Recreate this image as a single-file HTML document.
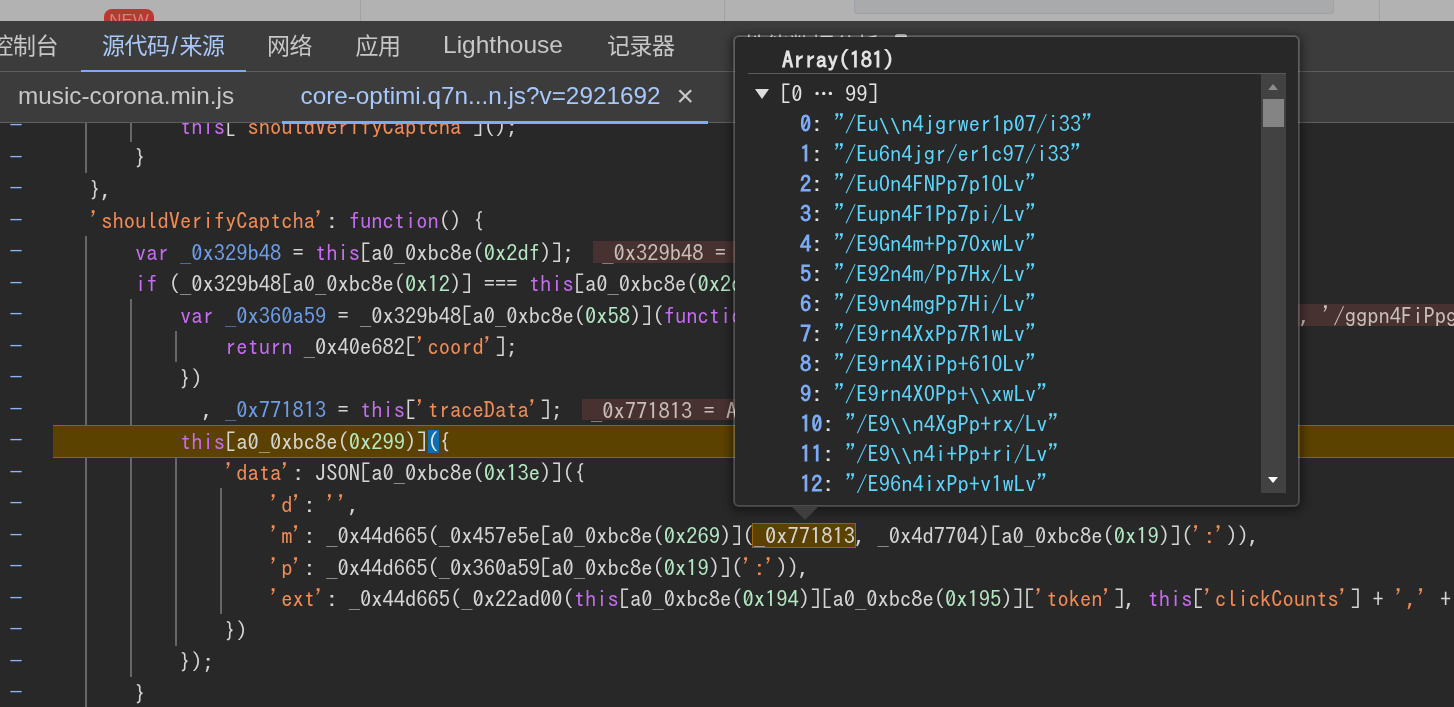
<!DOCTYPE html>
<html lang="zh-CN"><head><meta charset="utf-8"><title>DevTools</title>
<style>
*{box-sizing:border-box;margin:0;padding:0}
html,body{width:1454px;height:707px;overflow:hidden;background:#282828}
body{position:relative;font-family:"Liberation Sans","Noto Sans CJK SC",sans-serif;color:#e3e3e3}
.mono,.ln,.gm,.pop{font-family:"IPAGothic","DejaVu Sans Mono","Liberation Mono",monospace;font-size:22.5px;font-size-adjust:ch-width 0.5;}
/* page strip behind devtools */
#strip{will-change:transform;position:absolute;left:0;top:0;width:1454px;height:21px;background:#b2b2b2;overflow:hidden}
#strip .vl{position:absolute;top:0;width:1px;height:21px;background:#a1a1a4}
#strip .inp{position:absolute;left:854px;top:-10px;width:480px;height:23.5px;background:#a9aaac;border:1px solid #a0a1aa;border-radius:3px}
#strip .new{position:absolute;left:104px;top:9px;width:50px;height:24px;border-radius:8px;background:#b63a30;color:#c98880;font:normal 17px/16px "Liberation Sans",sans-serif;text-align:center;padding-top:3.6px;letter-spacing:0}
/* main tabs */
#tabs{will-change:transform;position:absolute;left:0;top:21px;width:1454px;height:51px;background:#3c3c3c;white-space:nowrap}
.hl{position:absolute;left:0;top:50px;width:1454px;height:1px;background:#5e5e5e}
#tabs span{position:absolute;top:0.5px;line-height:48px;font-size:23px;letter-spacing:-.5px;color:#c7c7c7}
#tabs span.on{color:#a8c7fa}
#tabs em{font-style:normal;margin:0 2px}
#tabs .ul{position:absolute;left:80.5px;top:48.7px;width:165.5px;height:2.5px;background:#7cacf8}
/* file tabs */
#files{will-change:transform;position:absolute;left:0;top:72px;width:1454px;height:51px;background:#3c3c3c;white-space:nowrap}
#files span{position:absolute;top:0;line-height:47px;font-size:24.3px;color:#c7c7c7}
#files span.on{color:#a8c7fa}
.ul2{position:absolute;left:282px;top:121px;width:426px;height:3px;background:#7cacf8}
/* code */
#code{position:absolute;left:0;top:123px;width:1454px;height:584px;overflow:hidden;background:#282828}
#code .inner{will-change:transform;position:absolute;left:0;top:-123px;width:1454px;height:707px}
.ln{position:absolute;left:0;width:1454px;height:31.5px;line-height:31.5px;white-space:pre;color:#d5d5d5}
.ln .tx{position:absolute;top:0.75px}
.bs{font-family:"DejaVu Sans Mono","Liberation Mono",monospace}
.ln .g{position:absolute;top:0;width:2px;height:31.5px;background:#676767}
.ln.exec{background:#5c4200;left:53px;width:1401px;border-top:1px solid #996400;border-bottom:1px solid #996400;height:33px;line-height:31.5px}
.ln.exec .tx{margin-left:-53px;top:-0.25px}
.k{color:#c56cf0}.d{color:#6f9ee8}.s{color:#f28b54}.n{color:#b4e8c4}
.chip{display:inline-block;margin-left:19.5px;padding:0 10px 0 9px;height:21.6px;line-height:24px;background:#473231;color:#c9bfba;vertical-align:top;margin-top:4.4px}
.bm{background:#0b6fb5;color:#e8e8e8}
.hv{background:#5c4200;outline:1px solid #996400;outline-offset:0;margin-left:-1px;padding-left:1px}
#gutter{position:absolute;left:0;top:123px;width:53px;height:584px;background:#282828;overflow:hidden}
#gutter .inner{will-change:transform;position:absolute;left:0;top:-123px}
.gm{position:absolute;left:9.5px;width:12px;height:31.5px;line-height:30.8px;color:#8ab4f8;text-align:center;transform:scale(1.25,.8)}
/* popup */
.pop{will-change:transform;position:absolute;left:733px;top:35px;width:567px;height:472px;background:#282828;background-clip:padding-box;border:2px solid rgba(255,255,255,.18);border-radius:6px;box-shadow:0 2px 10px 2px rgba(0,0,0,.45);color:#e3e3e3}
.pop .title{position:absolute;left:47px;top:7.5px;line-height:30px;font-weight:bold}
.pop .sep{position:absolute;left:13px;top:36px;width:538px;height:1px;background:#5a5a5a}
.pop .body{position:absolute;left:13px;top:37px;width:538px;height:419px;overflow:hidden}
.pop .tri{position:absolute;left:7px;top:14.5px;width:0;height:0;border-left:7.5px solid transparent;border-right:7.5px solid transparent;border-top:10.5px solid #dedede}
.pop .rng{position:absolute;left:32px;top:4.5px;line-height:30px;white-space:pre}
.pop .rows{position:absolute;left:52px;top:35px}
.pop .el{font-family:"Noto Sans CJK SC",sans-serif;font-size:20px;font-weight:bold;font-size-adjust:none;letter-spacing:0;position:relative;top:-1px}
.pop .row{height:30px;line-height:30px;white-space:pre}
.pop .row b{color:#7cacf8}
.pop .str{color:#5cd5fb}
.pop .sb{position:absolute;right:0;top:0;width:25px;height:419px;background:#424242}
.pop .sb .th{position:absolute;left:2px;top:24.8px;width:21.2px;height:28.2px;background:#848484}
.pop .sb .up{position:absolute;left:6.7px;top:9.8px;width:0;height:0;border-left:5.8px solid transparent;border-right:5.8px solid transparent;border-bottom:6.5px solid #8c8c8c}
.pop .sb .dn{position:absolute;left:6.7px;top:402.8px;width:0;height:0;border-left:5.8px solid transparent;border-right:5.8px solid transparent;border-top:6.5px solid #fff}
.arrow{position:absolute;left:790.5px;top:506px;width:0;height:0;border-left:14.5px solid transparent;border-right:14.5px solid transparent;border-top:14px solid #3e3e3e}
</style></head><body>
<div id="strip"><div class="new">NEW</div><i class="vl" style="left:360px"></i><i class="vl" style="left:724px"></i><div class="inp"></div><i class="vl" style="left:1379px"></i></div>
<div id="tabs"><div class="hl"></div><span style="left:-9.5px">控制台</span><span class="on" style="left:102px">源代码<em>/</em>来源</span><span style="left:267px">网络</span><span style="left:355.5px">应用</span><span style="left:443px;top:-0.5px;font-size:24.5px;letter-spacing:0">Lighthouse</span><span style="left:607px">记录器</span><span style="left:744px">性能数据分析</span><i style="position:absolute;left:895px;top:12.5px;width:12px;height:5px;border-radius:2.5px;background:#c7c7c7"></i><div class="ul"></div></div>
<div id="files"><div class="hl"></div><span style="left:18px">music-corona.min.js</span><span class="on" style="left:300.5px">core-optimi.q7n...n.js?v=2921692</span><span style="left:676.5px;font-size:30px">×</span></div>
<div id="code"><div class="inner">
<div class="ln" style="top:110.00px"><i class="g" style="left:85.00px"></i><i class="g" style="left:130.00px"></i><span class="tx" style="left:180.00px"><span class="k">this</span>[<span class="s">'shouldVerifyCaptcha'</span>]();</span></div>
<div class="ln" style="top:141.50px"><i class="g" style="left:85.00px"></i><span class="tx" style="left:135.00px">}</span></div>
<div class="ln" style="top:173.00px"><span class="tx" style="left:90.00px">},</span></div>
<div class="ln" style="top:204.50px"><span class="tx" style="left:90.00px"><span class="s">'shouldVerifyCaptcha'</span>: <span class="k">function</span>() {</span></div>
<div class="ln" style="top:236.00px"><i class="g" style="left:85.00px"></i><span class="tx" style="left:135.00px"><span class="k">var</span> <span class="d">_0x329b48</span> = <span class="k">this</span>[a0_0xbc8e(<span class="n">0x2df</span>)];<span class="chip">_0x329b48 = {options: {…}, traceData: Array(181)}</span></span></div>
<div class="ln" style="top:267.50px"><i class="g" style="left:85.00px"></i><span class="tx" style="left:135.00px"><span class="k">if</span> (_0x329b48[a0_0xbc8e(<span class="n">0x12</span>)] === <span class="k">this</span>[a0_0xbc8e(<span class="n">0x2d3</span>)]) {</span></div>
<div class="ln" style="top:299.00px"><i class="g" style="left:85.00px"></i><i class="g" style="left:130.00px"></i><span class="tx" style="left:180.00px"><span class="k">var</span> <span class="d">_0x360a59</span> = _0x329b48[a0_0xbc8e(<span class="n">0x58</span>)](<span class="k">function</span>(_0x40e682) {</span></div>
<div class="ln" style="top:330.50px"><i class="g" style="left:85.00px"></i><i class="g" style="left:130.00px"></i><i class="g" style="left:175.00px"></i><span class="tx" style="left:225.00px"><span class="k">return</span> _0x40e682[<span class="s">'coord'</span>];</span></div>
<div class="ln" style="top:362.00px"><i class="g" style="left:85.00px"></i><i class="g" style="left:130.00px"></i><span class="tx" style="left:180.00px">})</span></div>
<div class="ln" style="top:393.50px"><i class="g" style="left:85.00px"></i><i class="g" style="left:130.00px"></i><span class="tx" style="left:202.50px">, <span class="d">_0x771813</span> = <span class="k">this</span>[<span class="s">'traceData'</span>];<span class="chip">_0x771813 = Array(181)</span></span></div>
<div class="ln exec" style="top:425.00px"><span class="tx" style="left:180.00px"><span class="k">this</span>[a0_0xbc8e(<span class="n">0x299</span>)]<span class="bm">(</span>{</span></div>
<div class="ln" style="top:456.50px"><i class="g" style="left:85.00px"></i><i class="g" style="left:130.00px"></i><i class="g" style="left:175.00px"></i><span class="tx" style="left:225.00px"><span class="s">'data'</span>: JSON[a0_0xbc8e(<span class="n">0x13e</span>)]({</span></div>
<div class="ln" style="top:488.00px"><i class="g" style="left:85.00px"></i><i class="g" style="left:130.00px"></i><i class="g" style="left:175.00px"></i><i class="g" style="left:220.00px"></i><span class="tx" style="left:270.00px"><span class="s">'d'</span>: <span class="s">''</span>,</span></div>
<div class="ln" style="top:519.50px"><i class="g" style="left:85.00px"></i><i class="g" style="left:130.00px"></i><i class="g" style="left:175.00px"></i><i class="g" style="left:220.00px"></i><span class="tx" style="left:270.00px"><span class="s">'m'</span>: _0x44d665(_0x457e5e[a0_0xbc8e(<span class="n">0x269</span>)](<span class="hv">_0x771813</span>, _0x4d7704)[a0_0xbc8e(<span class="n">0x19</span>)](<span class="s">':'</span>)),</span></div>
<div class="ln" style="top:551.00px"><i class="g" style="left:85.00px"></i><i class="g" style="left:130.00px"></i><i class="g" style="left:175.00px"></i><i class="g" style="left:220.00px"></i><span class="tx" style="left:270.00px"><span class="s">'p'</span>: _0x44d665(_0x360a59[a0_0xbc8e(<span class="n">0x19</span>)](<span class="s">':'</span>)),</span></div>
<div class="ln" style="top:582.50px"><i class="g" style="left:85.00px"></i><i class="g" style="left:130.00px"></i><i class="g" style="left:175.00px"></i><i class="g" style="left:220.00px"></i><span class="tx" style="left:270.00px"><span class="s">'ext'</span>: _0x44d665(_0x22ad00(<span class="k">this</span>[a0_0xbc8e(<span class="n">0x194</span>)][a0_0xbc8e(<span class="n">0x195</span>)][<span class="s">'token'</span>], <span class="k">this</span>[<span class="s">'clickCounts'</span>] + <span class="s">','</span> + <span class="k">this</span>[<span class="s">'startTime'</span>])),</span></div>
<div class="ln" style="top:614.00px"><i class="g" style="left:85.00px"></i><i class="g" style="left:130.00px"></i><i class="g" style="left:175.00px"></i><span class="tx" style="left:225.00px">})</span></div>
<div class="ln" style="top:645.50px"><i class="g" style="left:85.00px"></i><i class="g" style="left:130.00px"></i><span class="tx" style="left:180.00px">});</span></div>
<div class="ln" style="top:677.00px"><i class="g" style="left:85.00px"></i><span class="tx" style="left:135.00px">}</span></div>
<div class="ln" style="top:299.00px;left:1180px;width:300px"><span class="tx" style="left:0"><span class="chip" style="margin-left:0;padding:0;width:300px"><span style="position:absolute;left:18.50px">Pp7p1OLv', '/ggpn4FiPpg7p1OLv', …]</span></span></span></div>
</div></div>
<div id="gutter"><div class="inner"><div class="gm" style="top:110.00px">-</div><div class="gm" style="top:141.50px">-</div><div class="gm" style="top:173.00px">-</div><div class="gm" style="top:204.50px">-</div><div class="gm" style="top:236.00px">-</div><div class="gm" style="top:267.50px">-</div><div class="gm" style="top:299.00px">-</div><div class="gm" style="top:330.50px">-</div><div class="gm" style="top:362.00px">-</div><div class="gm" style="top:393.50px">-</div><div class="gm" style="top:425.00px">-</div><div class="gm" style="top:456.50px">-</div><div class="gm" style="top:488.00px">-</div><div class="gm" style="top:519.50px">-</div><div class="gm" style="top:551.00px">-</div><div class="gm" style="top:582.50px">-</div><div class="gm" style="top:614.00px">-</div><div class="gm" style="top:645.50px">-</div><div class="gm" style="top:677.00px">-</div></div></div>
<div class="ul2"></div>
<div class="pop"><div class="title">Array(181)</div><div class="sep"></div>
<div class="body"><div class="tri"></div><div class="rng">[0 <span class="el">…</span> 99]</div><div class="rows"><div class="row"><b>0</b>: <span class="str">"/Eu<span class="bs">\</span><span class="bs">\</span>n4jgrwer1p07/i33"</span></div><div class="row"><b>1</b>: <span class="str">"/Eu6n4jgr/er1c97/i33"</span></div><div class="row"><b>2</b>: <span class="str">"/EuOn4FNPp7p1OLv"</span></div><div class="row"><b>3</b>: <span class="str">"/Eupn4F1Pp7pi/Lv"</span></div><div class="row"><b>4</b>: <span class="str">"/E9Gn4m+Pp7OxwLv"</span></div><div class="row"><b>5</b>: <span class="str">"/E92n4m/Pp7Hx/Lv"</span></div><div class="row"><b>6</b>: <span class="str">"/E9vn4mgPp7Hi/Lv"</span></div><div class="row"><b>7</b>: <span class="str">"/E9rn4XxPp7R1wLv"</span></div><div class="row"><b>8</b>: <span class="str">"/E9rn4XiPp+61OLv"</span></div><div class="row"><b>9</b>: <span class="str">"/E9rn4XOPp+<span class="bs">\</span><span class="bs">\</span>xwLv"</span></div><div class="row"><b>10</b>: <span class="str">"/E9<span class="bs">\</span><span class="bs">\</span>n4XgPp+rx/Lv"</span></div><div class="row"><b>11</b>: <span class="str">"/E9<span class="bs">\</span><span class="bs">\</span>n4i+Pp+ri/Lv"</span></div><div class="row"><b>12</b>: <span class="str">"/E96n4ixPp+v1wLv"</span></div><div class="row"><b>13</b>: <span class="str">"/E9Kn4ixPp+v1/Lv"</span></div></div>
<div class="sb"><div class="up"></div><div class="th"></div><div class="dn"></div></div></div></div>
<div class="arrow"></div>
</body></html>
